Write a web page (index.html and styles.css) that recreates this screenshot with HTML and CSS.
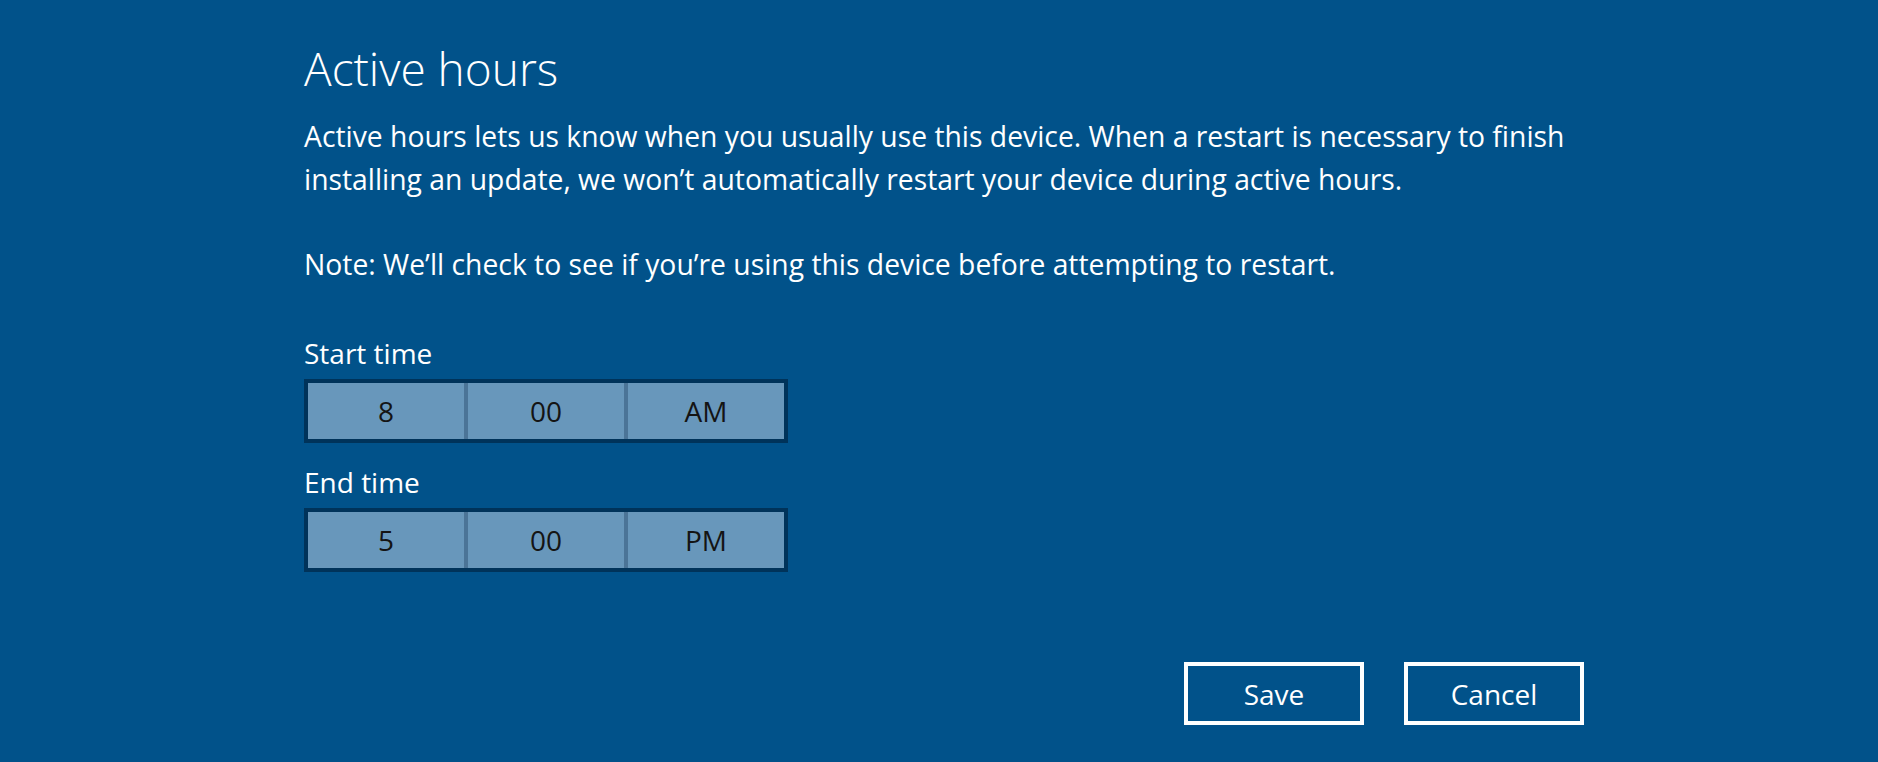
FILE: index.html
```html
<!DOCTYPE html>
<html>
  <head>
    <meta charset="UTF-8">
    <link rel="stylesheet" href="styles.css">
    <title>Active hours</title>
  </head>
  <body>
    <div class="page">
      <h1>Active hours</h1>
      <p class="intro">Active hours lets us know when you usually use this device. When a restart is necessary to finish installing an update, we won’t automatically restart your device during active hours.</p>
      <p class="note">Note: We’ll check to see if you’re using this device before attempting to restart.</p>

      <div class="field">
        <label>Start time</label>
        <div class="picker">
          <div class="cell">8</div>
          <div class="cell">00</div>
          <div class="cell">AM</div>
        </div>
      </div>

      <div class="field">
        <label>End time</label>
        <div class="picker">
          <div class="cell">5</div>
          <div class="cell">00</div>
          <div class="cell">PM</div>
        </div>
      </div>

      <div class="actions">
        <button>Save</button>
        <button>Cancel</button>
      </div>
    </div>
  </body>
</html>
```

FILE: styles.css
```css
body {
    margin: 0;
    background-color: #01528a;
    color: #ffffff;
    font-family: "Open Sans", "Noto Sans", sans-serif;
    height: 762px;
    overflow: hidden;
}

.page {
    width: 1280px;
    padding: 38px 0 0 304px;
}

h1 {
    margin: 0;
    font-size: 46px;
    font-weight: 300;
    line-height: 60px;
}

.intro {
    margin: 17px 0 0 0;
    font-size: 28.3px;
    line-height: 43px;
}

.note {
    margin: 42px 0 0 0;
    font-size: 28.3px;
    line-height: 43px;
}

.field {
    margin-top: 47px;
}

.field + .field {
    margin-top: 19px;
}

.field label {
    display: block;
    font-size: 28px;
    line-height: 40px;
}

.picker {
    display: flex;
    width: 476px;
    height: 56px;
    margin-top: 6px;
    border: 4px solid #00335a;
    background-color: #4b7497;
    gap: 4px;
}

.cell {
    flex: 1;
    display: flex;
    align-items: center;
    justify-content: center;
    background-color: #6897bb;
    color: #141414;
    font-size: 28px;
}

.actions {
    display: flex;
    justify-content: flex-end;
    gap: 40px;
    margin-top: 90px;
}

button {
    width: 180px;
    height: 63px;
    background-color: transparent;
    border: 4px solid #ffffff;
    color: #ffffff;
    font-family: "Open Sans", "Noto Sans", sans-serif;
    font-size: 28px;
    cursor: pointer;
}
```
